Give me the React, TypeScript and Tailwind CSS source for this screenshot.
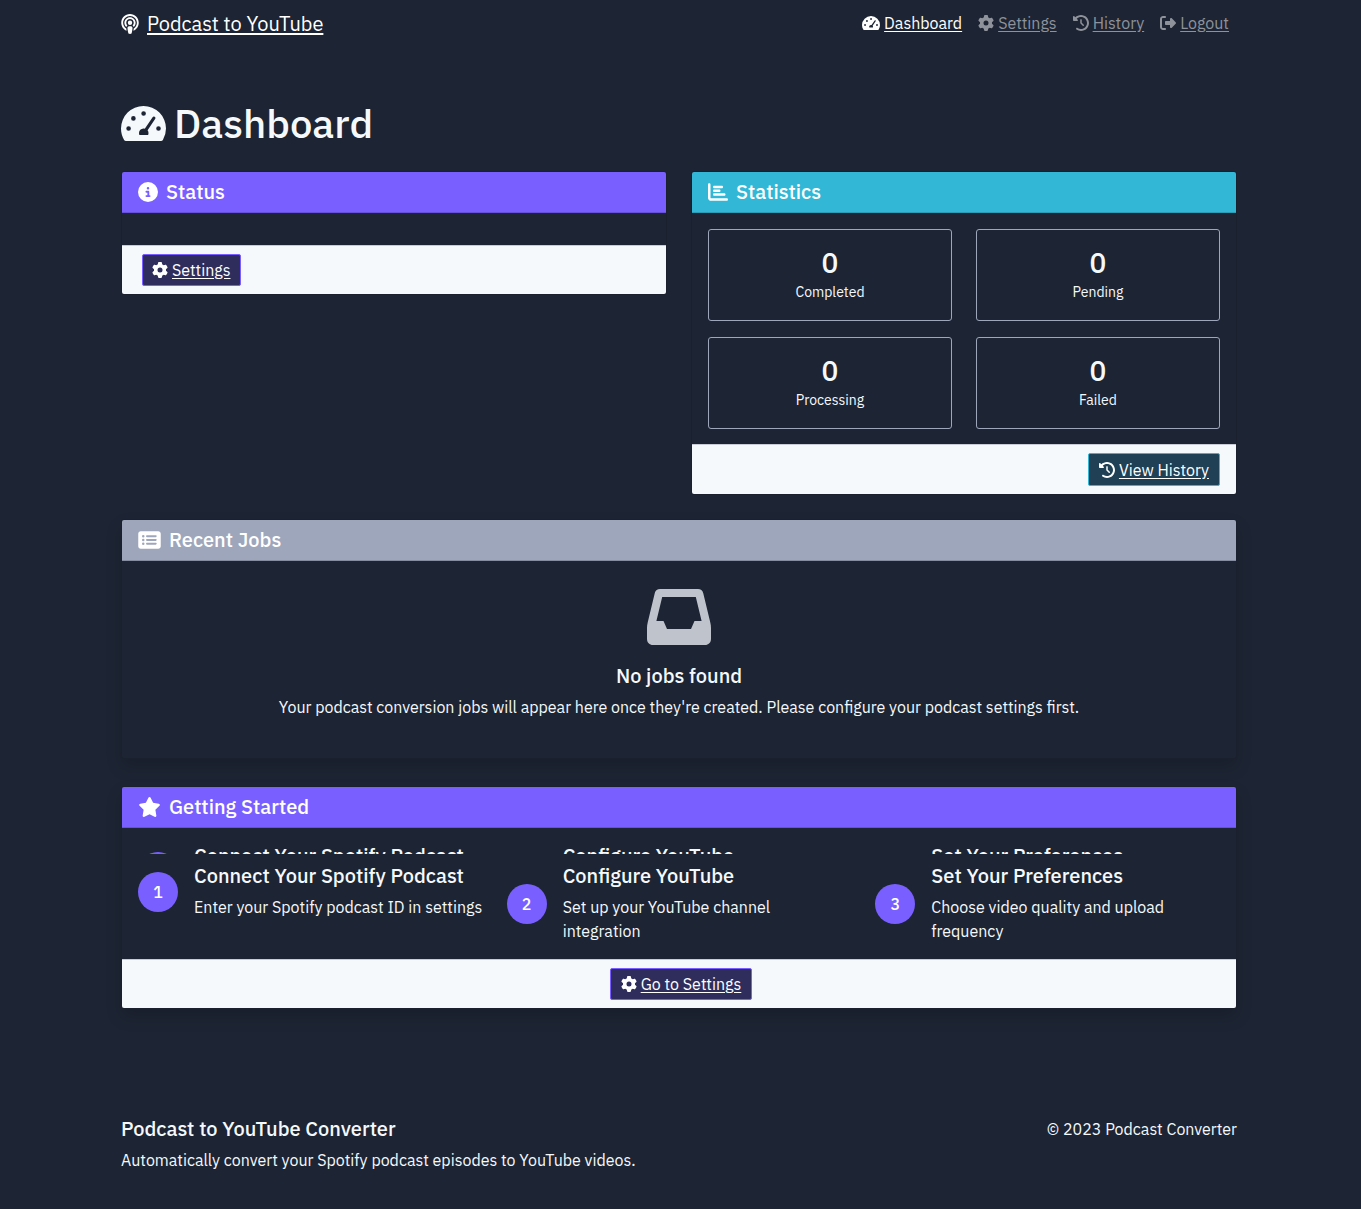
import type { ReactNode } from "react";
import {
  FaChartBar,
  FaCircleInfo,
  FaClockRotateLeft,
  FaGear,
  FaPodcast,
  FaRectangleList,
  FaRightFromBracket,
  FaStar,
} from "react-icons/fa6";

function GaugeIcon({ className }: { className: string }) {
  return (
    <svg viewBox="0 0 45 35" className={className} fill="currentColor" fillRule="evenodd" aria-hidden="true">
      <path
        d="M22.5 0A22.5 22.5 0 0 0 0 22.5c0 4.1 1.1 8 3.1 11.4.4.7 1.1 1.1 1.9 1.1h35c.8 0 1.5-.4 1.9-1.1A22.4 22.4 0 0 0 45 22.5 22.5 22.5 0 0 0 22.5 0Z
        M7.6 20.2a2.3 2.3 0 1 1 0 4.6 2.3 2.3 0 0 1 0-4.6Z
        M12.4 10.1a2.3 2.3 0 1 1 0 4.6 2.3 2.3 0 0 1 0-4.6Z
        M22.6 5.2a2.3 2.3 0 1 1 0 4.6 2.3 2.3 0 0 1 0-4.6Z
        M37.5 20.2a2.3 2.3 0 1 1 0 4.6 2.3 2.3 0 0 1 0-4.6Z
        M31.6 11.2a1.5 1.5 0 0 1 2.5 1.7L26.6 24.2c.6.8.9 1.700.9 2.800 0 .7-.1 1.300-.4 2H18.400c-.3-.6-.4-1.300-.4-2 0-2.500 2-4.400 4.400-4.500.4 0 1 .1 1.400.2Z"
      />
    </svg>
  );
}

function InboxIcon({ className }: { className: string }) {
  return (
    <svg viewBox="0 0 64 56" className={className} fill="currentColor" fillRule="evenodd" aria-hidden="true">
      <path
        d="M13 0h38c2.600 0 4.600 1.500 5.200 4L63.300 33.500c.5 2 .7 3.500.7 5.500v11c0 3.500-2.500 6-6 6H6c-3.500 0-6-2.500-6-6V39c0-2 .2-3.500.7-5.500L7.800 4C8.400 1.500 10.400 0 13 0Z
        M15.200 8 9.400 32H16.500l3.500 8h24l3.500-8h7.100L48.800 8Z"
      />
    </svg>
  );
}

const navLinks = [
  { label: "Dashboard", icon: <GaugeIcon className="h-[14px] w-[18px]" />, active: true },
  { label: "Settings", icon: <FaGear />, active: false },
  { label: "History", icon: <FaClockRotateLeft />, active: false },
  { label: "Logout", icon: <FaRightFromBracket />, active: false },
];

const stats = [
  { label: "Completed", value: 0 },
  { label: "Pending", value: 0 },
  { label: "Processing", value: 0 },
  { label: "Failed", value: 0 },
];

const steps = [
  { title: "Connect Your Spotify Podcast", text: "Enter your Spotify podcast ID in settings" },
  { title: "Configure YouTube", text: "Set up your YouTube channel integration" },
  { title: "Set Your Preferences", text: "Choose video quality and upload frequency" },
];

function Card({ tone, icon, title, shadow = "", children }: {
  tone: string;
  icon: ReactNode;
  title: string;
  shadow?: string;
  children: ReactNode;
}) {
  return (
    <section className={`overflow-hidden rounded-[3px] border border-[#1a202d] bg-[#1d2433] ${shadow}`}>
      <h2 className={`flex h-[41px] items-center gap-2 border-b border-black/15 px-4 text-xl leading-6 font-medium text-white ${tone}`}>
        {icon}
        {title}
      </h2>
      {children}
    </section>
  );
}

function CardFooter({ align, children }: { align: string; children: ReactNode }) {
  return (
    <div className={`flex border-t border-[#c9ccd6] bg-[#f5f9fc] py-2 ${align}`}>{children}</div>
  );
}

function ActionLink({ tone, icon, label }: { tone: string; icon: ReactNode; label: string }) {
  return (
    <a href="#" className={`flex items-center gap-1 rounded-[2px] border text-white ${tone}`}>
      {icon}
      <span className="underline underline-offset-2">{label}</span>
    </a>
  );
}

function StepsPeek() {
  return (
    <div className="grid h-[26px] grid-cols-3 gap-6 overflow-hidden px-4 pt-[18px]" aria-hidden="true">
      {steps.map((step, i) => (
        <div key={step.title} className="flex gap-4 text-xl leading-5 font-medium">
          <span className={`mt-[6px] size-10 shrink-0 rounded-full ${i === 0 ? "bg-[#795fff]" : ""}`} />
          {step.title}
        </div>
      ))}
    </div>
  );
}

function Steps() {
  return (
    <ol className="grid grid-cols-3 gap-6 px-4 pt-[10px] pb-4">
      {steps.map((step, i) => (
        <li key={step.title} className="flex items-center gap-4 self-start">
          <span className="flex size-10 shrink-0 items-center justify-center rounded-full bg-[#795fff] font-medium text-white">
            {i + 1}
          </span>
          <div>
            <h3 className="mb-[7px] text-xl leading-6 font-medium">{step.title}</h3>
            <p>{step.text}</p>
          </div>
        </li>
      ))}
    </ol>
  );
}

export default function App() {
  return (
    <div className="min-h-screen bg-[#1d2433] pr-[3px] font-['IBM_Plex_Sans',Roboto,sans-serif] text-base leading-6 text-[#f5f9fc]">
      <div className="mx-auto max-w-[1140px] px-3">
        <header className="flex h-12 items-center justify-between">
          <a href="#" className="flex items-center gap-2 text-xl text-white">
            <FaPodcast className="w-[18px]" />
            <span className="underline underline-offset-2">Podcast to YouTube</span>
          </a>
          <nav className="flex gap-4 pr-2 pb-[2px]">
            {navLinks.map((link) => (
              <a
                key={link.label}
                href="#"
                className={`flex items-center gap-1 ${link.active ? "text-white" : "text-[#8e929a]"}`}
              >
                {link.icon}
                <span className="underline underline-offset-2">{link.label}</span>
              </a>
            ))}
          </nav>
        </header>

        <main>
          <h1 className="mt-[51px] flex items-center gap-2 text-[40px] leading-12 font-medium">
            <GaugeIcon className="h-[35px] w-[45px]" />
            Dashboard
          </h1>

          <div className="mt-6 grid grid-cols-2 items-start gap-6">
            <Card tone="bg-[#795fff]" icon={<FaCircleInfo />} title="Status">
              <div className="p-4" />
              <CardFooter align="justify-start px-5">
                <ActionLink tone="h-8 px-[9px] border-[#795fff] bg-[#2f2d5c]" icon={<FaGear />} label="Settings" />
              </CardFooter>
            </Card>

            <Card tone="bg-[#32b8d6]" icon={<FaChartBar />} title="Statistics">
              <dl className="grid grid-cols-2 gap-x-6 gap-y-4 px-4 pt-4 pb-[15px]">
                {stats.map((s) => (
                  <div key={s.label} className="flex flex-col-reverse rounded-[3px] border border-[#9ea6bc] pt-[15px] pb-[17px] text-center">
                    <dt className="text-sm leading-[22px]">{s.label}</dt>
                    <dd className="text-[28px] leading-9 font-medium">{s.value}</dd>
                  </div>
                ))}
              </dl>
              <CardFooter align="justify-end px-4">
                <ActionLink tone="h-[33px] px-[10px] border-[#32b8d6] bg-[#1f4055]" icon={<FaClockRotateLeft />} label="View History" />
              </CardFooter>
            </Card>
          </div>

          <div className="mt-6">
            <Card
              tone="bg-[#9ea6bc]"
              icon={<FaRectangleList className="w-[23px]" />}
              title="Recent Jobs"
              shadow="shadow-[0_8px_16px_rgba(0,0,0,0.15)]"
            >
              <div className="px-4 pt-7 pb-[39px] text-center">
                <InboxIcon className="mx-auto mb-[19px] h-14 w-16 text-[#bfc3cb]" />
                <h3 className="mb-[7px] text-xl leading-6 font-medium">No jobs found</h3>
                <p>
                  Your podcast conversion jobs will appear here once they're created. Please configure your
                  podcast settings first.
                </p>
              </div>
            </Card>
          </div>

          <div className="mt-[27px]">
            <Card
              tone="bg-[#795fff]"
              icon={<FaStar className="w-[23px]" />}
              title="Getting Started"
              shadow="shadow-[0_8px_16px_rgba(0,0,0,0.15)]"
            >
              <StepsPeek />
              <Steps />
              <CardFooter align="justify-center pr-4 pl-5">
                <ActionLink tone="h-8 px-[10px] border-[#795fff] bg-[#2f2d5c]" icon={<FaGear />} label="Go to Settings" />
              </CardFooter>
            </Card>
          </div>
        </main>

        <footer className="mt-[108px] flex items-start justify-between pb-9">
          <div>
            <h2 className="mb-[7px] text-xl leading-6 font-medium">Podcast to YouTube Converter</h2>
            <p>Automatically convert your Spotify podcast episodes to YouTube videos.</p>
          </div>
          <p>© 2023 Podcast Converter</p>
        </footer>
      </div>
    </div>
  );
}
